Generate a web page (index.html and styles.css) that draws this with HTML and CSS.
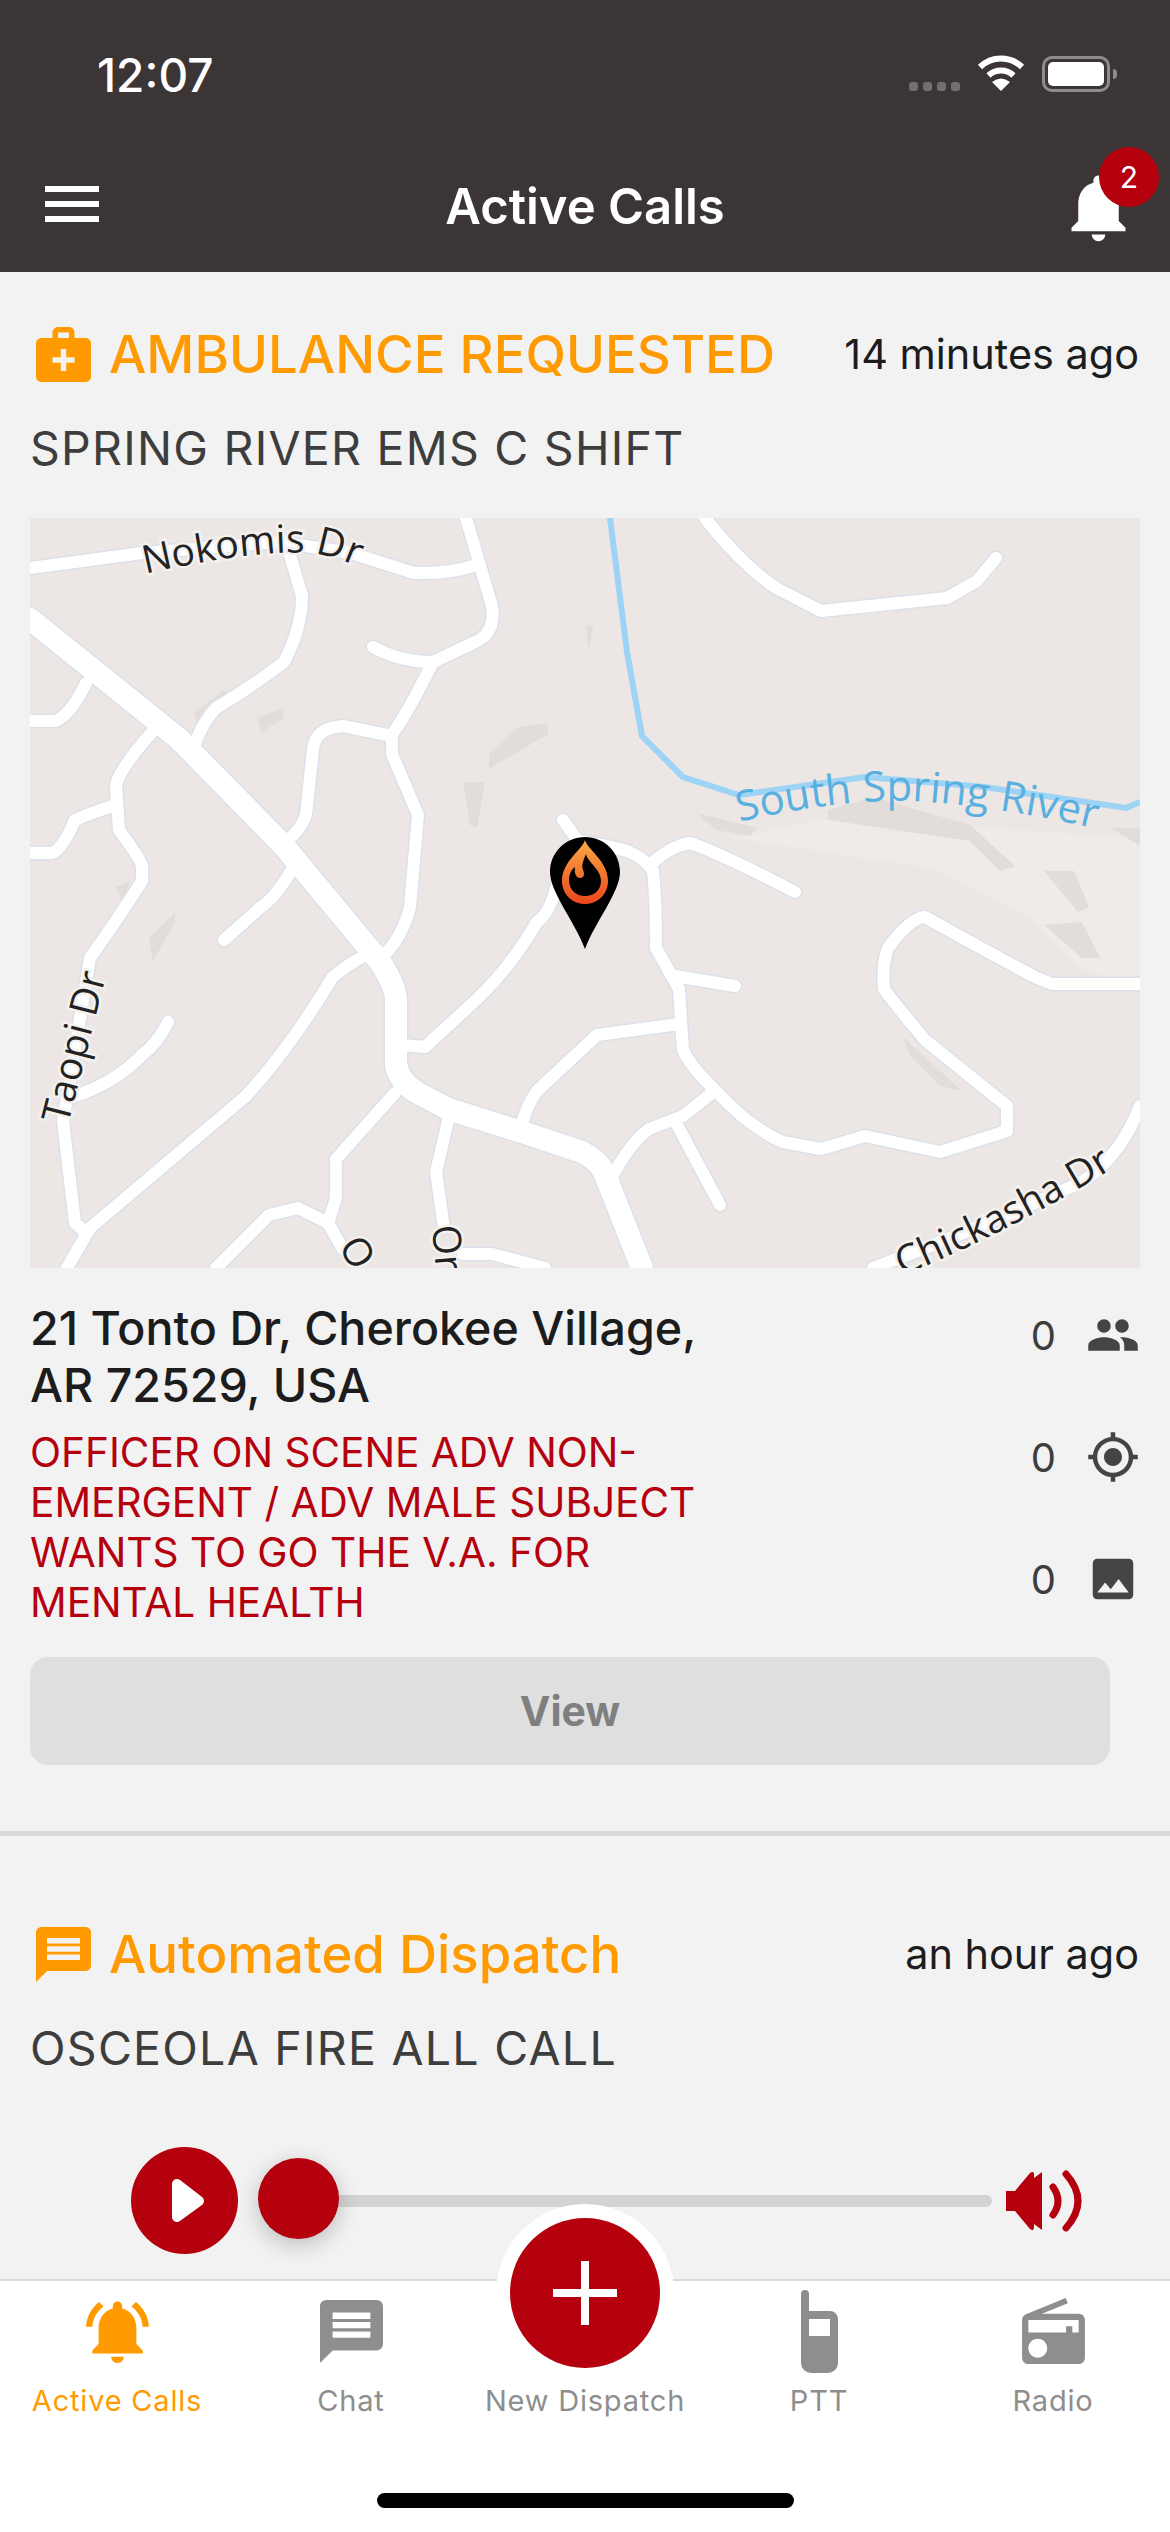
FILE: index.html
```html
<!DOCTYPE html>
<html>
<head>
<meta charset="utf-8">
<title>Active Calls</title>
<link rel="stylesheet" href="styles.css">
</head>
<body>
  <div class="page">
    <header class="top">
      <div class="status-bar">
        <span class="clock">12:07</span>
        <div class="status-icons">
          <div class="signal"><i></i><i></i><i></i><i></i></div>
          <svg class="wifi" viewBox="0 0 48 36">
            <path d="M3 12 A30 30 0 0 1 45 12" fill="none" stroke="#fff" stroke-width="6"/>
            <path d="M11.5 20.5 A18 18 0 0 1 36.5 20.5" fill="none" stroke="#fff" stroke-width="6"/>
            <path d="M24 36 L15 27 Q24 20 33 27 Z" fill="#fff"/>
          </svg>
          <div class="battery"><div class="battery-fill"></div></div>
        </div>
      </div>
      <nav class="nav-bar">
        <div class="menu"><i></i><i></i><i></i></div>
        <h1 class="nav-title">Active Calls</h1>
        <div class="nav-bell">
          <svg viewBox="0 0 24 24"><path d="M12 22c1.1 0 2-.9 2-2h-4c0 1.1.89 2 2 2zm6-6v-5c0-3.07-1.64-5.64-4.5-6.32V4c0-.83-.67-1.5-1.5-1.5s-1.5.67-1.5 1.5v.68C7.63 5.36 6 7.92 6 11v5l-2 2v1h16v-1l-2-2z"/></svg>
          <span class="badge">2</span>
        </div>
      </nav>
    </header>

    <main class="feed">
      <section class="call first">
        <div class="call-head">
          <svg class="call-icon" viewBox="2 2 20 20"><path d="M20 6h-4V4c0-1.1-.9-2-2-2h-4c-1.1 0-2 .9-2 2v2H4c-1.1 0-2 .9-2 2v12c0 1.1.9 2 2 2h16c1.1 0 2-.9 2-2V8c0-1.1-.9-2-2-2zM10 4h4v2h-4V4zm6 11h-3v3h-2v-3H8v-2h3v-3h2v3h3v2z"/></svg>
          <span class="call-type">AMBULANCE REQUESTED</span>
          <span class="call-time">14 minutes ago</span>
        </div>
        <div class="call-unit">SPRING RIVER EMS C SHIFT</div>

        <svg class="map" viewBox="0 0 1110 750">
          <defs>
            <linearGradient id="flame" x1="0" y1="0" x2="0" y2="1">
              <stop offset="0" stop-color="#fbaa45"/>
              <stop offset="1" stop-color="#ea461c"/>
            </linearGradient>
            <path id="lblNokomis" d="M115 56 Q220 32 276 35 Q310 37 345 58"/>
            <path id="lblRiver" d="M709 304 Q820 278 900 284 Q1000 293 1085 316"/>
            <path id="lblTaopi" d="M38 607 L78 450"/>
            <path id="lblChickasha" d="M872 758 Q1000 705 1115 630"/>
            <g id="roads">
              <path d="M0 50 L112 35 L250 24 L321 35 L384 55 Q420 56 447 47"/>
              <path d="M436 0 L462 88 Q466 115 445 124 L403 144 Q370 144 343 129"/>
              <path d="M403 144 Q375 200 362 216 L362 236 L388 297 L380 389 Q372 420 354 437"/>
              <path d="M362 218 L313 208 Q285 210 283 231 L276 297 Q272 310 257 323"/>
              <path d="M257 27 L272 78 Q272 110 254 144 Q220 170 186 190 Q172 205 165 226"/>
              <path d="M0 203 L26 203 Q42 195 56 165"/>
              <path d="M123 213 Q90 250 86 267 L89 312 Q110 340 112 348 L112 363 Q85 405 60 440 L33 603 L45 705 L56 715"/>
              <path d="M0 335 L22 335 Q32 332 45 302 Q60 295 86 287"/>
              <path d="M261 353 Q245 380 231 389 L194 422"/>
              <path d="M138 504 Q128 525 112 537 Q85 565 45 578"/>
              <path d="M336 437 Q315 448 302 460 Q260 530 216 578 L60 710 L37 750"/>
              <path d="M533 302 L548 323 Q580 328 597 333 Q615 340 623 353 Q626 380 626 430 L649 471 L653 532 Q660 548 686 573 Q720 610 753 624 L791 631 L835 618 L910 634 L977 613 L977 588 L895 522 Q860 480 854 471 Q852 445 858 430 Q880 400 895 399 Q950 430 1007 460 L1022 466 L1110 466"/>
              <path d="M619 348 Q640 328 660 325 Q690 335 765 374"/>
              <path d="M645 458 L705 468"/>
              <path d="M526 369 Q520 395 507 404 Q480 450 447 481 L395 529 L373 527"/>
              <path d="M649 506 L567 517 L507 573 Q495 590 492 608"/>
              <path d="M682 575 L653 598 L619 611 Q600 625 582 659"/>
              <path d="M645 603 L690 687"/>
              <path d="M365 575 L306 641 L306 680 L298 705"/>
              <path d="M418 603 L406 654 L414 710"/>
              <path d="M186 750 L239 697 L268 690 L298 705 L313 731"/>
              <path d="M433 736 L462 736 L515 750"/>
              <path d="M675 0 Q710 45 746 70 L791 93 L917 80 L947 63 L966 40"/>
              <path d="M843 750 Q950 710 1050 665 Q1090 640 1110 588"/>
            </g>
            <path id="mainRoad" d="M0 101 L149 221 L254 328 L351 445 Q366 470 366 481 L366 547 Q370 565 388 575 L418 591 L492 614 L552 634 Q568 642 574 654 L612 750"/>
          </defs>
          <rect width="1110" height="750" fill="#ece7e4"/>
          <polygon class="patch-light" points="700,320 800,300 1110,320 1110,470 1050,450 1000,400 900,350"/>
          <g class="patch">
            <polygon points="164,195 194,172 201,182 168,211"/>
            <polygon points="227,200 253,190 253,200 231,215"/>
            <polygon points="459,236 485,210 518,205 518,216 459,251"/>
            <polygon points="433,264 455,264 447,310 440,307"/>
            <polygon points="556,108 563,108 559,134"/>
            <polygon points="86,369 100,363 93,384"/>
            <polygon points="119,420 145,394 145,404 123,443"/>
            <polygon points="667,295 727,310 720,318 686,312"/>
            <polygon points="798,292 843,279 940,307 985,348 970,353 940,323 798,302"/>
            <polygon points="1014,353 1044,353 1059,389 1048,394"/>
            <polygon points="1014,407 1052,404 1070,440 1052,440"/>
            <polygon points="873,519 932,573 910,568 880,537"/>
            <polygon points="1081,310 1110,310 1110,328"/>
          </g>
          <use href="#roads" class="road-case"/>
          <use href="#mainRoad" class="main-case"/>
          <use href="#roads" class="road"/>
          <use href="#mainRoad" class="main-road"/>
          <path class="river" d="M580 0 L597 134 L612 218 L653 259 L709 277 L835 259 L955 269 L1096 290 L1110 284"/>
          <text class="map-label"><textPath href="#lblNokomis">Nokomis Dr</textPath></text>
          <text class="map-label"><textPath href="#lblTaopi">Taopi Dr</textPath></text>
          <text class="map-label"><textPath href="#lblChickasha">Chickasha Dr</textPath></text>
          <text class="map-label" transform="translate(308 728) rotate(60)">O</text>
          <text class="map-label" transform="translate(402 708) rotate(85)">Or</text>
          <text class="map-label water"><textPath href="#lblRiver">South Spring River</textPath></text>
          <g transform="translate(520 319)">
            <path d="M35 0 C54 0 70 15 70 35 C70 55 45 85 35 112 C25 85 0 55 0 35 C0 15 16 0 35 0Z" fill="#000"/>
            <path d="M35 3 C33 12 12 24 12 44 C12 57 22 67 35 67 C48 67 58 57 58 44 C58 24 37 12 35 3Z" fill="url(#flame)"/>
            <path d="M36 17 C38 26 51 32 51 44 C51 53 44 59 35 59 C26 59 19 53 19 43 C19 38 21 33 25 30 C24 36 26 41 30 41 C34 41 35 37 33 33 C31 28 34 22 36 17Z" fill="#000"/>
          </g>
        </svg>

        <div class="details">
          <div class="details-text">
            <div class="address">21 Tonto Dr, Cherokee Village, AR 72529, USA</div>
            <div class="notes">OFFICER ON SCENE ADV NON-EMERGENT / ADV MALE SUBJECT WANTS TO GO THE V.A. FOR MENTAL HEALTH</div>
          </div>
          <div class="stats">
            <div class="stat"><span>0</span>
              <svg viewBox="0 0 24 24"><path d="M16 11c1.66 0 2.99-1.34 2.99-3S17.66 5 16 5c-1.66 0-3 1.34-3 3s1.34 3 3 3zm-8 0c1.66 0 2.99-1.34 2.99-3S9.66 5 8 5C6.34 5 5 6.34 5 8s1.34 3 3 3zm0 2c-2.33 0-7 1.17-7 3.5V19h14v-2.5c0-2.33-4.67-3.5-7-3.5zm8 0c-.29 0-.62.02-.97.05 1.16.84 1.97 1.97 1.97 3.45V19h6v-2.5c0-2.33-4.67-3.5-7-3.5z"/></svg>
            </div>
            <div class="stat"><span>0</span>
              <svg viewBox="0 0 24 24"><path d="M12 8c-2.21 0-4 1.79-4 4s1.79 4 4 4 4-1.79 4-4-1.79-4-4-4zm8.94 3c-.46-4.17-3.77-7.48-7.94-7.94V1h-2v2.06C6.83 3.52 3.52 6.83 3.06 11H1v2h2.06c.46 4.17 3.77 7.48 7.94 7.94V23h2v-2.06c4.17-.46 7.48-3.77 7.94-7.94H23v-2h-2.06zM12 19c-3.87 0-7-3.13-7-7s3.13-7 7-7 7 3.13 7 7-3.13 7-7 7z"/></svg>
            </div>
            <div class="stat"><span>0</span>
              <svg viewBox="0 0 24 24"><path d="M21 19V5c0-1.1-.9-2-2-2H5c-1.1 0-2 .9-2 2v14c0 1.1.9 2 2 2h14c1.1 0 2-.9 2-2zM8.5 13.5l2.5 3.01L14.5 12l4.5 6H5l3.5-4.5z"/></svg>
            </div>
          </div>
        </div>
        <button class="view-btn">View</button>
      </section>

      <section class="call second">
        <div class="call-head">
          <svg class="call-icon" viewBox="2 2 20 20"><path fill-rule="evenodd" d="M20 2H4c-1.1 0-2 .9-2 2v18l4-4h14c1.1 0 2-.9 2-2V4c0-1.1-.9-2-2-2zM6 6v2h12V6H6zm0 3v2h12V9H6zm0 3v2h12v-2H6z"/></svg>
          <span class="call-type">Automated Dispatch</span>
          <span class="call-time">an hour ago</span>
        </div>
        <div class="call-unit">OSCEOLA FIRE ALL CALL</div>
        <div class="player">
          <svg class="play" viewBox="0 0 107 107">
            <circle cx="53.5" cy="53.5" r="53.5" fill="#b5000e"/>
            <path d="M46 37 L68 54 L46 70 Z" fill="#fff" stroke="#fff" stroke-width="10" stroke-linejoin="round"/>
          </svg>
          <div class="slider">
            <div class="slider-thumb"></div>
          </div>
          <svg class="volume" viewBox="0 0 77 62">
            <path d="M0 21 H9 L24 3 Q28 0 28 5 V57 Q28 62 24 59 L9 41 H0 Z M28 8 L36 2 V60 L28 54 Z" fill="#b5000e"/>
            <path d="M47 17 Q57 31 47 45" fill="none" stroke="#b5000e" stroke-width="7" stroke-linecap="round"/>
            <path d="M60 4 Q84 31 60 58" fill="none" stroke="#b5000e" stroke-width="7" stroke-linecap="round"/>
          </svg>
        </div>
      </section>
    </main>

    <footer class="tabs">
      <div class="tab active">
        <div class="tab-icon"><svg width="63" height="63" viewBox="2 2 20 20"><path d="M7.58 4.08L6.15 2.65C3.75 4.48 2.17 7.3 2.03 10.5h2c.15-2.65 1.51-4.97 3.55-6.42zm12.39 6.42h2c-.15-3.2-1.73-6.02-4.12-7.85l-1.42 1.43c2.02 1.45 3.39 3.77 3.54 6.42zM18 11c0-3.07-1.64-5.64-4.5-6.32V4c0-.83-.67-1.5-1.5-1.5s-1.5.67-1.5 1.5v.68C7.63 5.36 6 7.92 6 11v5l-2 2v1h16v-1l-2-2v-5zm-6 11c.14 0 .27-.01.4-.04.65-.14 1.18-.58 1.44-1.18.1-.24.15-.5.15-.78h-4c.01 1.1.9 2 2.01 2z"/></svg></div>
        <span>Active Calls</span>
      </div>
      <div class="tab">
        <div class="tab-icon"><svg width="63" height="63" viewBox="2 2 20 20"><path fill-rule="evenodd" d="M20 2H4c-1.1 0-2 .9-2 2v18l4-4h14c1.1 0 2-.9 2-2V4c0-1.1-.9-2-2-2zM6 6v2h12V6H6zm0 3v2h12V9H6zm0 3v2h12v-2H6z"/></svg></div>
        <span>Chat</span>
      </div>
      <div class="tab">
        <div class="tab-icon"></div>
        <span>New Dispatch</span>
      </div>
      <div class="tab">
        <div class="tab-icon"><svg width="37" height="83" viewBox="0 0 37 83"><path fill-rule="evenodd" d="M0 4 a4 4 0 0 1 8 0 V21 H29 a8 8 0 0 1 8 8 V73 a10 10 0 0 1 -10 10 H10 a10 10 0 0 1 -10 -10 Z M8 29 V46 H29 V29 Z"/></svg></div>
        <span>PTT</span>
      </div>
      <div class="tab">
        <div class="tab-icon"><svg width="63" height="66" viewBox="2 1 20 21"><path d="M3.24 6.15C2.51 6.43 2 7.17 2 8v12c0 1.1.89 2 2 2h16c1.11 0 2-.9 2-2V8c0-1.11-.89-2-2-2H8.3l8.26-3.34L15.88 1 3.24 6.15zM7 20c-1.66 0-3-1.34-3-3s1.34-3 3-3 3 1.34 3 3-1.34 3-3 3zm13-8h-2v-2h-2v2H4V8h16v4z"/></svg></div>
        <span>Radio</span>
      </div>
      <div class="fab">
        <div class="fab-inner">
          <svg width="64" height="64" viewBox="0 0 64 64"><path d="M28 0h8v28h28v8H36v28h-8V36H0v-8h28z" fill="#fff"/></svg>
        </div>
      </div>
      <div class="home-bar"></div>
    </footer>
  </div>
</body>
</html>
```

FILE: styles.css
```css
* {
  box-sizing: border-box;
}

html, body {
  margin: 0;
  padding: 0;
  height: 2532px;
  overflow: hidden;
}

body {
  font-family: Inter, "Liberation Sans", sans-serif;
  background-color: #f2f2f2;
}

.page {
  display: flex;
  flex-direction: column;
  height: 2532px;
}

/* top bar */
.top {
  height: 272px;
  flex: none;
  background-color: #3b3536;
  color: white;
}

.status-bar {
  height: 136px;
  padding: 50px 60px 0 97px;
  display: flex;
  justify-content: space-between;
}

.clock {
  font-size: 46px;
  line-height: 50px;
  font-weight: 500;
}

.status-icons {
  display: flex;
  align-items: flex-start;
  padding-top: 5px;
}

.signal {
  display: flex;
  gap: 5px;
  margin-top: 27px;
  margin-right: 17px;
}

.signal i {
  display: block;
  width: 9px;
  height: 9px;
  border-radius: 3px;
  background-color: #736f6f;
}

.wifi {
  width: 48px;
  height: 36px;
  margin-right: 17px;
}

.battery {
  position: relative;
  width: 68px;
  height: 36px;
  border: 3px solid #8f8b8b;
  border-radius: 10px;
  padding: 3px;
  margin-top: 1px;
}

.battery::after {
  content: "";
  position: absolute;
  right: -10px;
  top: 10px;
  width: 4px;
  height: 10px;
  border-radius: 0 4px 4px 0;
  background-color: #8f8b8b;
}

.battery-fill {
  height: 100%;
  border-radius: 5px;
  background-color: white;
}

.nav-bar {
  height: 136px;
  padding: 0 45px;
  display: grid;
  grid-template-columns: 1fr auto 1fr;
  align-items: center;
}

.menu {
  display: flex;
  flex-direction: column;
  gap: 9px;
  width: 54px;
}

.menu i {
  display: block;
  height: 6px;
  background-color: white;
}

.nav-title {
  margin: 0;
  padding-top: 6px;
  font-size: 49px;
  font-weight: 600;
  line-height: 60px;
}

.nav-bell {
  position: relative;
  justify-self: end;
  width: 81px;
  height: 81px;
  margin-right: -14px;
  margin-top: 6px;
}

.nav-bell svg {
  display: block;
  width: 81px;
  height: 81px;
  fill: white;
}

.badge {
  position: absolute;
  top: -20px;
  left: 41px;
  width: 60px;
  height: 60px;
  border-radius: 50%;
  background-color: #b5000e;
  font-size: 30px;
  line-height: 60px;
  text-align: center;
}

/* call list */
.feed {
  flex: 1;
  min-height: 0;
  overflow: hidden;
}

.call.first {
  padding-top: 54px;
  height: 1564px;
  border-bottom: 5px solid #d9d9d9;
}

.call.second {
  padding-top: 90px;
}

.call-head {
  display: flex;
  align-items: center;
  height: 56px;
  padding: 0 31px 0 36px;
}

.call-icon {
  width: 55px;
  height: 55px;
  flex: none;
  fill: #ff9b00;
  margin-right: 18px;
}

.call-type {
  font-size: 52.7px;
  font-weight: 500;
  color: #ff9b00;
}

.call-time {
  margin-left: auto;
  font-size: 41.4px;
  color: #1c1c1c;
}

.call-unit {
  margin-top: 39px;
  padding-left: 30px;
  font-size: 46.5px;
  line-height: 54px;
  letter-spacing: 1.25px;
  color: #3d3d3d;
}

.map {
  display: block;
  width: 1110px;
  height: 750px;
  margin: 43px 0 0 30px;
}

.patch polygon {
  fill: #e2ddd9;
}

.patch-light {
  fill: #efebe8;
}

.road-case,
.road,
.main-case,
.main-road {
  fill: none;
  stroke-linejoin: round;
  stroke-linecap: round;
}

.road-case {
  stroke: #dde0ea;
  stroke-width: 15;
}

.road {
  stroke: white;
  stroke-width: 12;
}

.main-case {
  stroke: #dde0ea;
  stroke-width: 25;
}

.main-road {
  stroke: white;
  stroke-width: 22;
}

.river {
  fill: none;
  stroke: #9dd3f5;
  stroke-width: 6;
}

.map-label {
  font-family: "Open Sans", sans-serif;
  font-size: 39px;
  fill: #222;
  stroke: #f4f1ef;
  stroke-width: 5px;
  paint-order: stroke;
}

.map-label.water {
  fill: #58afe0;
  stroke: none;
  font-size: 42px;
}

.details {
  display: flex;
  justify-content: space-between;
  padding: 6px 30px 0 30px;
}

.details-text {
  width: 680px;
  padding-top: 26px;
}

.address {
  font-size: 46.6px;
  line-height: 57px;
  font-weight: 500;
  color: #1c1c1c;
}

.notes {
  margin-top: 14px;
  font-size: 40.6px;
  line-height: 50px;
  color: #b5000e;
}

.stats {
  display: flex;
  flex-direction: column;
}

.stat {
  height: 122px;
  display: flex;
  align-items: center;
  gap: 30px;
  font-size: 40px;
  color: #3d3d3d;
}

.stat svg {
  width: 54px;
  height: 54px;
  fill: #444;
}

.view-btn {
  display: block;
  width: 1080px;
  height: 108px;
  margin: 17px 0 0 30px;
  border: none;
  border-radius: 18px;
  background-color: #dfdfdf;
  color: #7f7f7f;
  font-family: Inter, sans-serif;
  font-size: 41px;
  font-weight: 700;
}

/* audio player */
.player {
  display: flex;
  align-items: center;
  margin-top: 72px;
  padding-left: 131px;
}

.play {
  width: 107px;
  height: 107px;
  flex: none;
}

.slider {
  position: relative;
  width: 720px;
  height: 12px;
  margin-left: 34px;
  border-radius: 6px;
  background-color: #d3d3d3;
}

.slider-thumb {
  position: absolute;
  left: -14px;
  top: -37px;
  width: 81px;
  height: 81px;
  border-radius: 50%;
  background-color: #b5000e;
  box-shadow: 0 6px 22px rgba(0, 0, 0, 0.22);
}

.volume {
  width: 77px;
  height: 62px;
  margin-left: 14px;
  flex: none;
}

/* tab bar */
.tabs {
  position: relative;
  flex: none;
  height: 253px;
  padding-top: 8px;
  border-top: 2px solid #d9d9d9;
  background-color: white;
  display: grid;
  grid-template-columns: repeat(5, 1fr);
  align-items: start;
}

.tab {
  display: flex;
  flex-direction: column;
  align-items: center;
  font-size: 29px;
  line-height: 36px;
  letter-spacing: 0.8px;
  color: #8e8e8e;
}

.tab svg {
  display: block;
  fill: #8e8e8e;
}

.tab.active {
  color: #ff9b00;
}

.tab.active svg {
  fill: #ff9b00;
}

.tab-icon {
  height: 84px;
  display: flex;
  align-items: center;
  margin-bottom: 10px;
}

.fab {
  position: absolute;
  top: -77px;
  left: 496px;
  width: 178px;
  height: 178px;
  border-radius: 50%;
  background-color: white;
  display: flex;
  align-items: center;
  justify-content: center;
}

.fab-inner {
  width: 150px;
  height: 150px;
  border-radius: 50%;
  background-color: #b5000e;
  display: flex;
  align-items: center;
  justify-content: center;
}

.home-bar {
  position: absolute;
  left: 377px;
  bottom: 24px;
  width: 417px;
  height: 15px;
  border-radius: 8px;
  background-color: black;
}
```
